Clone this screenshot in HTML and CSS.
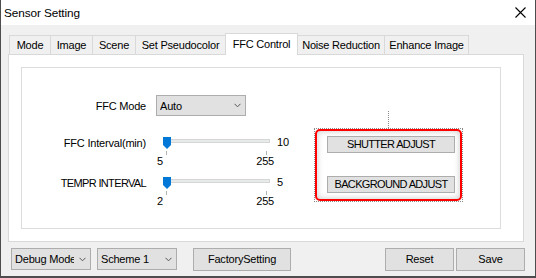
FILE: index.html
```html
<!DOCTYPE html>
<html lang="en">
<head>
  <meta charset="UTF-8" />
  <meta name="viewport" content="width=device-width, initial-scale=1.0"/>
  <title>Sensor Setting</title>
  <link rel="stylesheet" href="styles.css">
</head>
<body>
  <div class="window">
    <div class="titlebar">
      <span class="title">Sensor Setting</span>
      <svg class="close" width="11" height="11" viewBox="0 0 11 11">
        <path d="M0.5 0.5 L10.5 10.5 M10.5 0.5 L0.5 10.5" stroke="#000" stroke-width="1.1" fill="none"/>
      </svg>
    </div>

    <div class="tabs">
      <div class="tab">Mode</div>
      <div class="tab">Image</div>
      <div class="tab">Scene</div>
      <div class="tab">Set Pseudocolor</div>
      <div class="tab active">FFC Control</div>
      <div class="tab">Noise Reduction</div>
      <div class="tab">Enhance Image</div>
    </div>

    <div class="panel">
      <div class="group">
        <div class="form">
          <div class="field combo-field">
            <label class="label">FFC Mode</label>
            <div class="combo combo-mode">
              <span class="combo-text">Auto</span>
              <svg class="chev" width="7" height="5" viewBox="0 0 7 5"><path d="M0.5 0.8 L3.5 3.8 L6.5 0.8" stroke="#555" fill="none"/></svg>
            </div>
          </div>

          <div class="field slider-field">
            <label class="label">FFC Interval(min)</label>
            <div class="slider">
              <div class="slider-top">
                <div class="track">
                  <svg class="thumb" width="8" height="12" viewBox="0 0 8 12"><path d="M0 0 H8 V8 L4 12 L0 8 Z" fill="#0078d7"/></svg>
                </div>
                <span class="value">10</span>
              </div>
              <div class="ticks"></div>
              <div class="scale"><span>5</span><span>255</span></div>
            </div>
          </div>

          <div class="field slider-field">
            <label class="label caps">TEMPR INTERVAL</label>
            <div class="slider">
              <div class="slider-top">
                <div class="track">
                  <svg class="thumb" width="8" height="12" viewBox="0 0 8 12"><path d="M0 0 H8 V8 L4 12 L0 8 Z" fill="#0078d7"/></svg>
                </div>
                <span class="value">5</span>
              </div>
              <div class="ticks"></div>
              <div class="scale"><span>2</span><span>255</span></div>
            </div>
          </div>
        </div>

        <div class="adjust">
          <div class="stem"></div>
          <div class="dotted">
            <div class="highlight">
              <button class="btn adjust-btn caps">SHUTTER ADJUST</button>
              <button class="btn adjust-btn caps">BACKGROUND ADJUST</button>
            </div>
          </div>
        </div>
      </div>
    </div>

    <div class="bottom">
      <div class="combo combo-debug">
        <span class="combo-text">Debug Mode</span>
        <svg class="chev" width="7" height="5" viewBox="0 0 7 5"><path d="M0.5 0.8 L3.5 3.8 L6.5 0.8" stroke="#555" fill="none"/></svg>
      </div>
      <div class="combo combo-scheme">
        <span class="combo-text">Scheme 1</span>
        <svg class="chev" width="7" height="5" viewBox="0 0 7 5"><path d="M0.5 0.8 L3.5 3.8 L6.5 0.8" stroke="#555" fill="none"/></svg>
      </div>
      <button class="btn btn-factory">FactorySetting</button>
      <button class="btn btn-reset">Reset</button>
      <button class="btn btn-save">Save</button>
    </div>
  </div>
</body>
</html>
```

FILE: styles.css
```css
body {
  margin: 0;
  font-family: "Liberation Sans", Arial, sans-serif;
  font-size: 11px;
  letter-spacing: -0.2px;
  color: #000;
  background: #3c3c3c;
}
.caps {
  letter-spacing: -0.65px;
}
.window {
  width: 536px;
  height: 278px;
  box-sizing: border-box;
  border: 1px solid #4d4d4d;
  border-top: none;
  border-bottom-width: 2px;
  background: #f0f0f0;
  display: flex;
  flex-direction: column;
}
.titlebar {
  height: 25px;
  flex-shrink: 0;
  background: #fff;
  display: flex;
  align-items: center;
  justify-content: space-between;
  padding: 0 9px 0 3px;
}
.title {
  font-size: 11.8px;
  letter-spacing: -0.1px;
  padding-top: 1px;
}
.close {
  display: block;
}

/* tab strip */
.tabs {
  height: 29px;
  flex-shrink: 0;
  display: flex;
  align-items: flex-end;
  margin-left: 8px;
}
.tab {
  height: 19px;
  box-sizing: border-box;
  line-height: 18px;
  text-align: center;
  border: 1px solid #d9d9d9;
  border-bottom: none;
  margin-right: -1px;
  background: #f0f0f0;
  white-space: nowrap;
}
.tab:nth-child(1) { width: 42px; }
.tab:nth-child(2) { width: 43px; }
.tab:nth-child(3) { width: 44px; }
.tab:nth-child(4) { width: 91px; }
.tab:nth-child(5) { width: 73px; }
.tab:nth-child(6) { width: 88px; }
.tab:nth-child(7) { width: 85px; }
.tab.active {
  height: 22px;
  margin-bottom: -1px;
  line-height: 20px;
  background: #fff;
  position: relative;
  z-index: 1;
}

.panel {
  height: 188px;
  flex-shrink: 0;
  box-sizing: border-box;
  margin: 0 11px 0 7px;
  background: #fff;
  border: 1px solid #d9d9d9;
  padding: 12px 0 0 12px;
}
.group {
  width: 480px;
  height: 162px;
  box-sizing: border-box;
  border: 1px solid #dcdcdc;
  display: flex;
}
.form {
  width: 274px;
  padding-top: 27px;
}
.field {
  display: flex;
}
.label {
  width: 124px;
  padding-right: 10px;
  text-align: right;
  white-space: nowrap;
}
.combo-field {
  align-items: center;
  margin-bottom: 21px;
}
.slider-field {
  height: 40px;
}
.slider-field .label {
  line-height: 13px;
}

.combo {
  box-sizing: border-box;
  display: flex;
  align-items: center;
  background: #e1e1e1;
  border: 1px solid #adadad;
  padding: 0 4px 0 3px;
}
.combo-text {
  flex: 1;
  overflow: hidden;
  white-space: nowrap;
}
.chev {
  display: block;
  flex-shrink: 0;
  margin-left: 3px;
}
.combo-debug .chev {
  margin-left: 5px;
}
.combo-mode {
  width: 90px;
  height: 21px;
}

/* trackbars */
.slider {
  width: 140px;
}
.slider-top {
  display: flex;
  height: 13px;
}
.track {
  position: relative;
  box-sizing: border-box;
  width: 107px;
  height: 4px;
  margin: 2px 0 0 7px;
  background: #e7eaea;
  border: 1px solid #d6d6d6;
}
.thumb {
  position: absolute;
  left: -1px;
  top: -3px;
}
.value {
  margin-left: 7px;
  line-height: 11px;
}
.ticks {
  box-sizing: border-box;
  width: 101px;
  height: 4px;
  margin: 1px 0 0 10px;
  border-left: 1px solid #b4b4b4;
  border-right: 1px solid #b4b4b4;
}
.scale {
  width: 117px;
  margin: 1px 0 0 1px;
  display: flex;
  justify-content: space-between;
  line-height: 11px;
}

/* adjust buttons */
.adjust {
  margin-left: 18px;
  padding-top: 43px;
  display: flex;
  flex-direction: column;
  align-items: center;
}
.stem {
  width: 0;
  height: 17px;
  border-left: 1px dotted #8a8a8a;
}
.dotted {
  width: 149px;
  height: 74px;
  box-sizing: border-box;
  border: 1px dotted #8a8a8a;
}
.highlight {
  height: 72px;
  box-sizing: border-box;
  border: 2px solid #ff0000;
  border-radius: 5px;
  box-shadow: inset 0 0 6px rgba(0, 0, 0, 0.22);
  padding: 5px 0 0 10px;
}
.btn {
  box-sizing: border-box;
  font-family: "Liberation Sans", Arial, sans-serif;
  font-size: 11px;
  color: #000;
  background: #e1e1e1;
  border: 1px solid #adadad;
  padding: 0;
  display: block;
}
.adjust-btn {
  width: 128px;
  height: 17px;
  line-height: 15px;
  margin-bottom: 23px;
}

/* bottom bar */
.bottom {
  flex: 1;
  display: flex;
  align-items: center;
  padding: 0 10px;
}
.bottom .btn {
  letter-spacing: -0.2px;
}
.combo-debug {
  width: 80px;
  height: 22px;
}
.combo-scheme {
  width: 80px;
  height: 22px;
  margin-left: 6px;
}
.btn-factory {
  width: 98px;
  height: 23px;
  margin-left: 16px;
}
.btn-reset {
  width: 69px;
  height: 23px;
  margin-left: auto;
}
.btn-save {
  width: 69px;
  height: 23px;
  margin-left: 2px;
}
```
